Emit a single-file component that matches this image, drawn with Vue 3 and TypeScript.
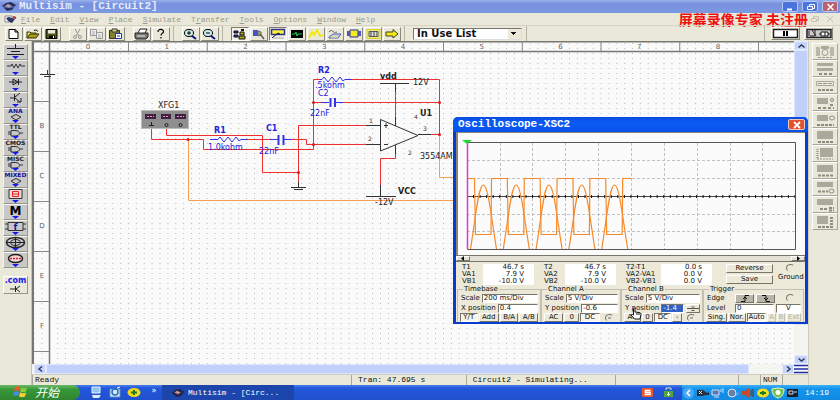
<script setup lang="ts">
import { ref } from 'vue'

interface Tool { name: string; art: string; pressed?: boolean }

const menus = ['File', 'Edit', 'View', 'Place', 'Simulate', 'Transfer', 'Tools', 'Options', 'Window', 'Help']

const toolGroups: { ruled: boolean; tools: Tool[] }[] = [
  {
    ruled: false,
    tools: [
      { name: 'New', art: '<path d="M4 1.500h6l3 2.500v6.500H4z" fill="#fff" stroke="#000"/><path d="M10 1.500v2.500h3" fill="none" stroke="#000"/>' },
      { name: 'Open', art: '<path d="M3 10V4h3l1 1h5v2" fill="#e8e060" stroke="#333300"/><path d="M3 10l3-4h9l-3 4z" fill="#a8a020" stroke="#333300"/><path d="M10 2.500c2-1 3 0 4 1" fill="none" stroke="#000"/>' },
      { name: 'Save', art: '<path d="M3 1.500h11v9H3z" fill="#555a10" stroke="#000"/><path d="M5 2h7v3.500H5z" fill="#e8e8d8"/><path d="M6 7.500h6V11H6z" fill="#000"/><path d="M10 8h1v2h-1z" fill="#fff"/>' },
    ],
  },
  {
    ruled: false,
    tools: [
      { name: 'Cut', art: '<path d="M6 1l4 7M11 1L7 8" stroke="#999" fill="none"/><circle cx="6" cy="9" r="1.500" stroke="#999" fill="none"/><circle cx="11" cy="9" r="1.500" stroke="#999" fill="none"/>' },
      { name: 'Copy', art: '<path d="M2.500 1.500h6v6h-6zM8.500 4.500h6v6h-6z" fill="#eee" stroke="#999"/><path d="M4 4h3M4 6h3M10 7h3M10 9h3" stroke="#aaa"/>' },
      { name: 'Paste', art: '<path d="M2.500 2.500h10v8h-10z" fill="#858030" stroke="#333"/><path d="M5 1h5v3H5z" fill="#ddd870" stroke="#333"/><path d="M8.500 5.500h6v5h-6z" fill="#fff" stroke="#2233aa"/><path d="M10 8h3" stroke="#2233aa"/>' },
    ],
  },
  {
    ruled: false,
    tools: [
      { name: 'Print', art: '<path d="M5 5l2-4h7l-2 4" fill="#fff" stroke="#222"/><path d="M2 5h13v4l-2 2H3L2 9z" fill="#777" stroke="#222"/><path d="M4 8h8" stroke="#eee"/>' },
      { name: 'Help', art: '<path d="M6 4c0-4 6-3 5.500 0C11 5.500 9 5 9 7.500M9 9v1.500" fill="none" stroke="#000" stroke-width="1.200"/>' },
    ],
  },
  {
    ruled: true,
    tools: [
      { name: 'Zoom in', art: '<path d="M9.500 7.500L14 11" stroke="#111188" stroke-width="2"/><ellipse cx="7" cy="5" rx="4.500" ry="3.500" fill="#ccefee" stroke="#000"/><path d="M5 5h4M7 3v4" stroke="#000"/>' },
      { name: 'Zoom out', art: '<path d="M9.500 7.500L14 11" stroke="#111188" stroke-width="2"/><ellipse cx="7" cy="5" rx="4.500" ry="3.500" fill="#ccefee" stroke="#000"/><path d="M5 5h4" stroke="#000"/>' },
    ],
  },
  {
    ruled: true,
    tools: [
      { name: 'Component design', pressed: true, art: '<path d="M3 3h4v2H3zM3 7h4v2H3z" fill="#2030c0" stroke="#111"/><path d="M8 8h6v3H8zM9 4h4v3H9z" fill="#aaa820" stroke="#111"/><path d="M10 2h3" stroke="#111" stroke-width="2"/>' },
      { name: 'Component editor', art: '<path d="M3 2h5v6H3z" fill="#4a50c8"/><path d="M8 3l3 1v3L8 8z" fill="#b0b050" stroke="#666"/><path d="M10 6l4 5" stroke="#555" stroke-width="1.500"/>' },
      { name: 'Instruments', pressed: true, art: '<path d="M2.500 1.500h13v5h-13z" fill="#f8f040" stroke="#333388" stroke-width="1.500"/><path d="M3 10l6-5 2 1" stroke="#111" fill="none"/><path d="M4 10h11" stroke="#aaa"/>' },
      { name: 'Simulate', art: '<path d="M3 2h12v8H3z" fill="#000"/><path d="M4 6h3l1-2 1 4 1-2h4" stroke="#20d050" fill="none"/>' },
      { name: 'Analysis', art: '<path d="M2 10l3-6 2 3 3-5 3 6 3-1" stroke="#f2e800" stroke-width="1.800" fill="none"/>' },
      { name: 'Postprocessor', art: '<path d="M3 4c3-4 4 2 8 0" stroke="#666" fill="none"/><path d="M3 9l4-3h8l-3 4H3z" fill="#c8d0ee" stroke="#5560a8"/><path d="M5 9h7" stroke="#eee860"/>' },
      { name: 'VHDL', art: '<path d="M5 2h8v7H5z" fill="#f4ea20" stroke="#2a30a0"/><path d="M2 3h3v5H2zM13 3h3v5h-3z" fill="#5058b8"/>' },
      { name: 'Reports', art: '<path d="M3 1.500h13v9H3z" fill="#f2ee80" stroke="#d8d020"/><path d="M5 3.500h9v5H5z" fill="#ddd" stroke="#555"/><path d="M6 5h7M6 7h7" stroke="#444" stroke-dasharray="2 1"/>' },
      { name: 'Transfer', art: '<path d="M3 4h7V1.500L15 6l-5 4V8H3z" fill="#f4ea20" stroke="#444010"/>' },
    ],
  },
]

const tri = '<path d="M9 12h7l-3.500 3z" fill="#1515ee"/>'
const gate = '<path d="M8 6.500h4c6 0 6 5.500 0 5.500H8zM5 8h3M5 10h3M17 9h3" fill="none" stroke="#333"/>'
const chip = '<path d="M8 9l5-2.500 5 2.500-5 3z" stroke="#333" fill="none"/>'
const word = (text: string, color: string) =>
  `<text x="12.500" y="5" font-size="6" font-weight="bold" text-anchor="middle" fill="${color}">${text}</text>`

const palette: Tool[] = [
  { name: 'Sources', art: '<path d="M12.500 0v4M4 4.500h17M8 7.500h9M4 10.500h17" stroke="#222" fill="none"/>' + tri },
  { name: 'Basic', art: '<path d="M4 6h4l1-2 2 4 2-4 2 4 2-4 1 2h4" stroke="#333" fill="none"/>' + tri },
  { name: 'Diodes', art: '<path d="M6 6h13M10 3v6l5-3zM15.500 3v6" stroke="#222" fill="none"/>' + tri },
  { name: 'Transistors', art: '<path d="M7 6h4M11.500 2v7M12 5l5-4M12 6l5 4M14 10h4V6" stroke="#222" fill="none"/>' + tri },
  { name: 'Analog ICs', art: word('ANA', '#111199') + chip + tri },
  { name: 'TTL', art: word('TTL', '#222') + gate + tri },
  { name: 'CMOS', art: word('CMOS', '#222') + gate + tri },
  { name: 'Misc digital', art: word('MISC', '#222') + gate + tri },
  { name: 'Mixed ICs', art: word('MIXED', '#111199') + chip + tri },
  { name: 'Indicators', art: '<path d="M6 1.500h13v9H6z" fill="#f4d8d8" stroke="#333"/><path d="M9.500 3.500h6v5h-6zM9.500 6h6" stroke="#ee2020" fill="none"/>' + tri },
  { name: 'Miscellaneous', art: '<text x="12.500" y="11" font-size="12" font-weight="bold" text-anchor="middle" fill="#000">M</text>' + tri },
  { name: 'Controls', art: '<path d="M5 2.500h15v8H5zM2 4h3M2 9h3M20 4h3M20 9h3" stroke="#333" fill="none"/><text x="12.500" y="10" font-size="9" font-weight="bold" text-anchor="middle" fill="#1515aa">f</text>' + tri },
  { name: 'RF', art: '<ellipse cx="12.500" cy="6.500" rx="9" ry="5" fill="none" stroke="#222" stroke-width="1.500"/><path d="M4 6.500h17M12.500 1v11" stroke="#222"/><ellipse cx="12.500" cy="6.500" rx="5" ry="3" fill="none" stroke="#222"/>' + tri },
  { name: 'Electromechanical', art: '<ellipse cx="12.500" cy="6.500" rx="7" ry="4" fill="#eed8d8" stroke="#222" stroke-width="1.500"/><path d="M7 6.500h11" stroke="#dd2020" stroke-width="1.500" stroke-dasharray="2 1"/>' + tri },
]

const instruments: Tool[] = [
  { name: 'Multimeter', art: '<path d="M3 3h4v9H3zM17 3h4v9h-4z" fill="#b9b9ab"/><path d="M8 2h8v3H8z" fill="#aaa99b"/><circle cx="12" cy="8.500" r="3" fill="none" stroke="#99988c"/><path d="M5 13.500h14" stroke="#99988c" stroke-dasharray="3 1"/>' },
  { name: 'Function generator', art: '<path d="M4 2h16v3H4zM4 7h16v3H4z" fill="#aaa99b"/><path d="M6 13h13" stroke="#8d8c80" stroke-width="2" stroke-dasharray="3 2"/>' },
  { name: 'Wattmeter', art: '<path d="M3.500 3.500h17v4h-17z" fill="none" stroke="#aaa99b"/><path d="M5 5.500h14" stroke="#99988c" stroke-dasharray="4 1"/><path d="M5 12h15" stroke="#8d8c80" stroke-width="2" stroke-dasharray="3 1"/>' },
  { name: 'Oscilloscope', art: '<path d="M4 3h11v6H4z" fill="#aaa99b"/><circle cx="19" cy="5" r="1.500" fill="none" stroke="#8d8c80"/><path d="M5 13h16M17 10h4" stroke="#8d8c80" stroke-width="2" stroke-dasharray="3 2"/>' },
  { name: 'Bode plotter', art: '<path d="M4 3h11v6H4z" fill="#aaa99b"/><ellipse cx="19" cy="6" rx="2.500" ry="2" fill="none" stroke="#8d8c80"/><path d="M4 13h17" stroke="#8d8c80" stroke-width="2" stroke-dasharray="3 1"/>' },
  { name: 'Word generator', art: '<path d="M4 2h16v8H4z" fill="#aaa99b"/><path d="M5 13h15" stroke="#8d8c80" stroke-width="2" stroke-dasharray="3 1"/>' },
  { name: 'Logic analyzer', art: '<path d="M7 2h13v9H7z" fill="#aaa99b"/><path d="M4.500 3v10" stroke="#8d8c80" stroke-width="2" stroke-dasharray="1 1"/><path d="M4 13h16" stroke="#8d8c80" stroke-dasharray="2 1"/>' },
  { name: 'Logic converter', art: '<path d="M4 2h16v7H4z" fill="#aaa99b"/><path d="M5 12.500h15" stroke="#8d8c80" stroke-width="2" stroke-dasharray="3 1"/>' },
  { name: 'Distortion analyzer', art: '<path d="M4 2h16v5H4z" fill="#aaa99b"/><path d="M5 11.500h10" stroke="#8d8c80" stroke-width="2" stroke-dasharray="3 1"/><ellipse cx="18.500" cy="11" rx="2.500" ry="2" fill="none" stroke="#8d8c80"/>' },
  { name: 'Spectrum analyzer', art: '<path d="M4 2h16v6H4z" fill="#aaa99b"/><path d="M7 12h7M16 11h5M16 13.500h5" stroke="#8d8c80" stroke-width="2" stroke-dasharray="3 1"/>' },
  { name: 'Network analyzer', art: '<path d="M4 2h11v8H4z" fill="#aaa99b"/><path d="M5 13h15M17 4h4M17 7h4M17 10h4" stroke="#8d8c80" stroke-width="2" stroke-dasharray="3 1"/>' },
]

const quickLaunch: Tool[] = [
  { name: 'Show desktop', art: '<path d="M3 1h8v6H3z" fill="#8fc4f4" stroke="#e8f2ff"/><path d="M3 9h9l-2 3H4z" fill="#dfe9f5"/>' },
  { name: 'Mail', art: '<path d="M2 3h10v8H2z" fill="#d9e9f6" stroke="#5b8fc8"/><circle cx="7" cy="6" r="3" fill="none" stroke="#2c6cc0" stroke-width="1.500"/><path d="M9 2l3-1" stroke="#fff"/>' },
  { name: 'Security', art: '<ellipse cx="7" cy="6.500" rx="6.500" ry="4.500" fill="#f0d820"/><path d="M4 6.500h6M7 4v5" stroke="#1e7a20" stroke-width="2"/>' },
]

const trayIcons: Tool[] = [
  { name: 'Keyboard', art: '<path d="M1 3h6l4 3 2-1v3h-3L6 9H1z" fill="#27303c"/><path d="M3 4l3 3M6 4L3 7" stroke="#eee"/>' },
  { name: 'Network', art: '<path d="M1 3h7v5H1z" fill="#5a74b4" stroke="#cfe0ff"/><path d="M3 10h5M10 2v3M12 1v5" stroke="#cfe0ff"/>' },
  { name: 'Update', art: '<circle cx="6" cy="6" r="4" fill="#6680a8" stroke="#dce8f8"/><path d="M9 9l4-3" stroke="#88b8ff"/>' },
  { name: 'Volume', art: '<path d="M1 4h3l4-3v10L4 8H1z" fill="#c84828"/><path d="M10 3v6M12 2v8" stroke="#603020"/>' },
  { name: 'Antivirus', art: '<ellipse cx="7" cy="6" rx="6" ry="4.500" fill="#f0dc20"/><path d="M4 6h6M7 4v4" stroke="#1e7a20" stroke-width="2"/>' },
  { name: 'Shield', art: '<path d="M1 2l6-1 6 1c0 5-2 8-6 9-4-1-6-4-6-9z" fill="#6cc04c" stroke="#e8f4c8"/><circle cx="7" cy="5.500" r="2.500" fill="#fff"/>' },
  { name: 'Display', art: '<path d="M1 2h11v8H1z" fill="#18202c"/><path d="M3 4h4v3H3zM8 5h3" stroke="#c8d8ec" fill="none"/>' },
]

const columns = Array.from({ length: 9 }, (_, i) => ({ label: String(i), x: 88 + i * 78.75, edge: 128.5 + i * 78.75 }))
const rows = ['', 'B', 'C', 'D', 'E', 'F'].map((label, i) => ({ label, y: 77 + i * 50, edge: 101.5 + i * 50 }))

const period = 32.8
const squareWave = 'M467 178.500H474.500' + Array.from({ length: 5 }, (_, i) => {
  const x = 474.5 + i * period
  return `V178.500L${x + 1} 234.500H${x + 16.5}L${x + 17} 178.500H${i < 4 ? x + period : 631.5}`
}).join('')
const humps = Array.from({ length: 5 }, (_, i) => {
  const x = 470.5 + i * period
  return `M${x} 249C${x + 5.5} 215 ${x + 8} 185 ${x + 12.8} 185S${x + 20.5} 215 ${x + 26} 249`
}).join('')

const readouts = [
  { labels: ['T1', 'VA1', 'VB1'], values: ['46.7 s', '7.9 V', '-10.0 V'], wide: false },
  { labels: ['T2', 'VA2', 'VB2'], values: ['46.7 s', '7.9 V', '-10.0 V'], wide: false },
  { labels: ['T2-T1', 'VA2-VA1', 'VB2-VB1'], values: ['0.0 s', '0.0 V', '0.0 V'], wide: true },
]

const library = ref('In Use List')
const timeScale = ref('200 ms/Div')
const xPosition = ref('0.4')
const scaleA = ref('5 V/Div')
const positionA = ref('-0.6')
const scaleB = ref('5 V/Div')
const positionB = ref('-1.4')
const level = ref('0')
const levelUnit = ref('V')
const timeMode = ref('Y/T')
const triggerMode = ref('Auto')
</script>

<template>
  <div class="app">
    <header class="titlebar">
      <svg class="logo" width="14" height="11" viewBox="0 0 14 11" aria-hidden="true">
        <path d="M0 5l4-3 5-1 5 3-4 5-5 1z" fill="#27305e" /><path d="M3 5l3-2 4 2-3 2z" fill="#c7a9a0" /><path d="M1 6h12" stroke="#6d86d8" />
      </svg>
      <h1>Multisim - [Circuit2]</h1>
      <div class="winbuttons">
        <button type="button" aria-label="Minimize"><svg width="15" height="10"><path d="M4 7.500h5" stroke="#fff" stroke-width="2" /></svg></button>
        <button type="button" aria-label="Restore"><svg width="15" height="10"><path d="M6.500 4V2.500h5v4H10M4.500 4.500h5v3h-5z" stroke="#fff" fill="none" /></svg></button>
        <button type="button" class="close" aria-label="Close"><svg width="15" height="10"><path d="M4.500 2l6 6M10.500 2l-6 6" stroke="#fff" stroke-width="1.500" /></svg></button>
      </div>
    </header>

    <nav class="menubar">
      <svg class="docicon" width="13" height="9" viewBox="0 0 13 9" aria-hidden="true">
        <path d="M1 1h7v6H1z" fill="#fff" stroke="#888" /><path d="M2 3l3-1 6 2-3 4-4-2z" fill="#32356c" /><path d="M9 2l3 1" stroke="#b02828" stroke-width="2" />
      </svg>
      <button v-for="menu in menus" :key="menu" type="button">
        <template v-if="menu === 'Transfer'">T<u>r</u>ansfer</template>
        <template v-else><u>{{ menu[0] }}</u>{{ menu.slice(1) }}</template>
      </button>
      <span class="notice">屏幕录像专家 未注册</span>
      <svg class="mdi" width="28" height="10" aria-hidden="true">
        <path d="M5.500 4V2.500h5v4H9M3.500 4.500h5v3h-5zM19 2l6 6M25 2l-6 6" stroke="#c6c4b6" fill="none" />
      </svg>
    </nav>

    <div class="toolbar">
      <div v-for="(group, g) in toolGroups" :key="g" class="group" :class="{ ruled: group.ruled }">
        <button v-for="tool in group.tools" :key="tool.name" type="button" class="tool" :class="{ pressed: tool.pressed }" :aria-label="tool.name">
          <svg width="18" height="12" v-html="tool.art"></svg>
        </button>
      </div>
      <div class="group ruled">
        <select v-model="library" class="library" aria-label="Component list">
          <option>In Use List</option>
        </select>
      </div>
      <div class="group ruled runs">
        <button type="button" class="run" aria-label="Pause">
          <svg width="28" height="11"><path d="M1.500 1.500h24v8h-24z" fill="#fff" stroke="#222" stroke-width="1.500" /><path d="M12 3v5M15 3v5" stroke="#000" stroke-width="2" /></svg>
        </button>
        <button type="button" class="run" aria-label="Run">
          <svg width="28" height="11"><path d="M2 1.500h24v8H2z" fill="#ccc" stroke="#222" stroke-width="1.500" /><path d="M4 3v5M7 2l4 6M10 2v6H5M14 6h11" stroke="#222" fill="none" /><path d="M16 4h7v4h-7z" fill="#fff" stroke="#111" /><path d="M20 4v4" stroke="#111" /></svg>
        </button>
      </div>
    </div>

    <div class="body">
      <aside class="parts">
        <div class="stack">
          <button v-for="part in palette" :key="part.name" type="button" class="part" :aria-label="part.name">
            <svg width="25" height="16" v-html="part.art"></svg>
          </button>
        </div>
        <button type="button" class="web">
          <span>.com</span>
          <svg width="14" height="8" aria-hidden="true"><path d="M1 4h5M6.500 1v6M7 4l4-3M7 4l4 3" stroke="#222" fill="none" /></svg>
        </button>
      </aside>

      <main class="center">
        <div class="sheet">
          <svg class="canvas" role="img" aria-label="Circuit schematic">
            <defs>
              <pattern id="dots" x="1.5" y="2" width="7.875" height="5" patternUnits="userSpaceOnUse">
                <rect width="1" height="1" fill="#bcbcbc" />
              </pattern>
            </defs>
            <rect width="100%" height="100%" fill="#fafafa" />
            <rect width="100%" height="100%" fill="url(#dots)" />
            <g transform="translate(-32 -41)">
              <path d="M33 41V400M32 41.500H2000" stroke="#77776f" stroke-width="2" />
              <path d="M49.500 41V400M34 51.500H2000" stroke="#777" stroke-width="1.500" />
              <g class="ruler">
                <template v-for="c in columns" :key="c.label">
                  <path :d="`M${c.edge} 42V51`" />
                  <text :x="c.x" y="49">{{ c.label }}</text>
                </template>
                <template v-for="r in rows" :key="r.edge">
                  <path :d="`M34 ${r.edge}H49`" />
                  <text x="42" :y="r.y + 1">{{ r.label }}</text>
                </template>
              </g>
              <path d="M40 74.500H55M47.500 70V75M44 76.500H51" stroke="#333" fill="none" />

              <g class="wire amber">
                <path d="M188.500 139.500V200.500H470M439.500 134.500V177.500H470" />
              </g>
              <g class="wire red">
                <path d="M151.500 126V139.500H203.500V149.500H313.500V79.500H320M352 79.500H439.500V134.500H431" />
                <path d="M166.500 126V135.500H262.500V172.500H298.500M366 125.500H298.500V182" />
                <path d="M247 139.500H271M292 139.500H306.500V144.500H366" />
                <path d="M313.500 102.500H321M343 102.500H439.500" />
                <path d="M395.500 92V117M395.500 154V158.500H380.500V185" />
              </g>
              <g class="lead blue">
                <path d="M210 139.500H218L220 137L224 142L228 137L232 142L236 137L239 141L241 139.500H248" />
                <path d="M320 79.500H322L324 77L328 82L332 77L336 82L340 77L343 81L345 79.500H352" />
                <path d="M270 139.500H278M284 139.500H292M321 102.500H329M336 102.500H343" />
                <path d="M278.500 135V145M283.500 135V145M330.500 98V107M335 98V107" class="plate" />
              </g>
              <g class="lead dark">
                <path d="M380.500 119.500V151L418 135.500ZM366 125.500H380M366 144.500H380M418 134.500H431" />
                <path d="M380 83.500H409M395.500 83V92M395.500 117V126M395.500 145V154M380.500 185V196M366 196.500H396" />
                <path d="M298.500 182V187M291 187.500H306M294 189.500H303M384 125.500H388M386 123V128M384 144.500H388" />
              </g>
              <g fill="#e01818">
                <circle v-for="p in [[313.5, 102.5], [313.5, 144.5], [439.5, 102.5], [439.5, 134.5], [298.5, 172.5], [188, 139.5]]" :key="p.join()" :cx="p[0]" :cy="p[1]" r="1.5" />
              </g>

              <rect x="141.500" y="110.500" width="47" height="18" fill="#8f8f8f" stroke="#bcbcbc" />
              <path d="M145 114h11v5h-11zM161 114h10v5h-10zM175 114h11v5h-11z" fill="#44203f" />
              <path d="M147 116.500h7M163 116.500h6M177 116.500h7" stroke="#d89ad0" stroke-dasharray="2 1" />
              <path d="M149 125.500h5M151.500 122v4" stroke="#222" /><circle cx="166.500" cy="125" r="1.500" fill="none" stroke="#222" /><circle cx="180.500" cy="125" r="1.500" fill="none" stroke="#222" />

              <g class="tag blue">
                <text x="214" y="133" class="strong">R1</text><text x="208" y="150">1.0kohm</text>
                <text x="266" y="131" class="strong">C1</text><text x="259" y="154">22nF</text>
                <text x="318" y="73" class="strong">R2</text><text x="315" y="88">.5kohm</text>
                <text x="318" y="96">C2</text><text x="310" y="116">22nF</text>
              </g>
              <g class="tag dark">
                <text x="158" y="108">XFG1</text>
                <text x="380" y="79" class="strong">vdd</text><text x="413" y="85">12V</text>
                <text x="420" y="116" class="strong">U1</text><text x="420" y="159">3554AM</text>
                <text x="398" y="194" class="strong">VCC</text><text x="375" y="205">-12V</text>
              </g>
              <g class="pin">
                <text x="369" y="123">1</text><text x="368" y="141">2</text><text x="414" y="119">4</text>
                <text x="423" y="131">3</text><text x="408" y="155">2</text>
              </g>
            </g>
          </svg>
          <div class="vscroll">
            <button type="button" aria-label="Scroll up"><svg width="13" height="8"><path d="M3.500 5.500l3-2.500 3 2.500" stroke="#333a55" stroke-width="1.500" fill="none" /></svg></button>
            <span class="thumb"></span>
            <span class="track"></span>
            <button type="button" aria-label="Scroll down"><svg width="13" height="8"><path d="M3.500 2.500l3 2.500 3-2.500" stroke="#333a55" stroke-width="1.500" fill="none" /></svg></button>
          </div>
          <div class="hscroll">
            <button type="button" aria-label="Scroll left"><svg width="11" height="8"><path d="M7 1.500L4 4l3 2.500" stroke="#333a55" stroke-width="1.500" fill="none" /></svg></button>
            <span class="thumb"></span>
            <span class="track"></span>
            <button type="button" aria-label="Scroll right"><svg width="11" height="8"><path d="M4 1.500L7 4 4 6.500" stroke="#333a55" stroke-width="1.500" fill="none" /></svg></button>
          </div>
          <svg class="corner" width="14" height="10" aria-hidden="true"><path d="M0 1.500h14M0 5h14M0 8.500h14" stroke="#1c2fa8" stroke-width="1.500" /></svg>
        </div>

        <footer class="status">
          <span class="ready">Ready</span>
          <span class="tran">Tran: 47.695 s</span>
          <span class="sim">Circuit2 - Simulating...</span>
          <span class="blank"></span>
          <span class="cell"></span>
          <span class="cell">NUM</span>
          <span class="cell last"></span>
        </footer>

        <section class="scope" aria-label="Oscilloscope">
          <header>
            <h2>Oscilloscope-XSC2</h2>
            <button type="button" aria-label="Close oscilloscope"><svg width="16" height="10"><path d="M5 2l6 6M11 2L5 8" stroke="#fff" stroke-width="1.800" /></svg></button>
          </header>
          <svg class="trace" role="img" aria-label="Waveforms">
            <g transform="translate(-456 -132)">
              <path d="M457 132V256" stroke="#8a8678" stroke-width="2" />
              <path d="M456 132.500H806" stroke="#8a8678" />
              <path d="M500.500 143V249M532.500 143V249M565.500 143V249M598.500 143V249M631.500 143V249M664.500 143V249M697.500 143V249M730.500 143V249M762.500 143V249M467 160.500H795M467 178.500H795M467 214.500H795M467 231.500H795" stroke="#c2c2c2" stroke-dasharray="3 2" fill="none" />
              <path d="M467.500 142.500H795.500V249.500H467.500Z" stroke="#555" fill="none" />
              <path d="M467 196.500H795" stroke="#444" />
              <path d="M473 196.500H795" stroke="#111" stroke-width="3" stroke-dasharray="1 5.560" />
              <path :d="squareWave" class="wave" />
              <path :d="humps" class="wave" />
              <path d="M467.500 143V249" stroke="#e030e0" stroke-width="1.500" />
              <path d="M462 140h10l-5 4z" fill="#20d830" />
            </g>
          </svg>
          <div class="scrub">
            <button type="button" aria-label="Back"><svg width="12" height="5"><path d="M7 0v5L4 2.500z" fill="#000" /></svg></button>
            <button type="button" aria-label="Forward"><svg width="12" height="5"><path d="M5 0v5l3-2.500z" fill="#000" /></svg></button>
          </div>

          <div class="panel">
            <div class="readouts">
              <dl v-for="r in readouts" :key="r.labels[0]" :class="{ wide: r.wide }">
                <div v-for="(label, i) in r.labels" :key="label"><dt>{{ label }}</dt><dd>{{ r.values[i] }}</dd></div>
              </dl>
              <div class="actions">
                <button type="button" class="btn">Reverse</button>
                <button type="button" class="btn">Save</button>
              </div>
              <label class="ground"><input type="radio" name="ground" />Ground</label>
            </div>

            <div class="groups">
              <fieldset>
                <legend>Timebase</legend>
                <div class="row"><label for="ts">Scale</label><input id="ts" v-model="timeScale" class="text" /></div>
                <div class="row"><label for="xp">X position</label><input id="xp" v-model="xPosition" class="text" /></div>
                <div class="row keys">
                  <button v-for="m in ['Y/T', 'Add', 'B/A', 'A/B']" :key="m" type="button" class="btn" :class="{ down: m === timeMode }" @click="timeMode = m">{{ m }}</button>
                </div>
              </fieldset>
              <fieldset>
                <legend>Channel A</legend>
                <div class="row"><label for="sa">Scale</label><input id="sa" v-model="scaleA" class="text" /></div>
                <div class="row"><label for="ya">Y position</label><input id="ya" v-model="positionA" class="text" /></div>
                <div class="row keys">
                  <button type="button" class="btn">AC</button><button type="button" class="btn">0</button><button type="button" class="btn down">DC</button>
                  <input type="radio" name="cha" aria-label="Channel A terminal" checked />
                </div>
              </fieldset>
              <fieldset>
                <legend>Channel B</legend>
                <div class="row"><label for="sb">Scale</label><input id="sb" v-model="scaleB" class="text" /></div>
                <div class="row">
                  <label for="yb">Y position</label><input id="yb" v-model="positionB" class="text selected" />
                  <button type="button" class="btn spin" aria-label="Step"><svg width="12" height="7"><path d="M0 3.500h12M4.500 2h3M4.500 5.500h3" stroke="#555" /></svg></button>
                </div>
                <div class="row keys">
                  <button type="button" class="btn">AC</button><button type="button" class="btn">0</button><button type="button" class="btn down">DC</button><button type="button" class="btn">-</button>
                  <input type="radio" name="chb" aria-label="Channel B terminal" checked />
                </div>
              </fieldset>
              <fieldset>
                <legend>Trigger</legend>
                <div class="row edge">
                  <span>Edge</span>
                  <button type="button" class="btn grey" aria-label="Rising edge"><svg width="12" height="7"><path d="M2 6.500h4v-6h4M4 4l2-2 2 2" stroke="#111" fill="none" /></svg></button>
                  <button type="button" class="btn grey" aria-label="Falling edge"><svg width="12" height="7"><path d="M2 .5h4v6h4M4 3l2 2 2-2" stroke="#111" fill="none" /></svg></button>
                  <input type="radio" name="trig" aria-label="Trigger terminal" />
                </div>
                <div class="row edge"><label for="lv">Level</label><input id="lv" v-model="level" class="text" /><input v-model="levelUnit" class="text unit" aria-label="Level unit" /></div>
                <div class="row keys">
                  <button v-for="m in ['Sing.', 'Nor.', 'Auto']" :key="m" type="button" class="btn" :class="{ down: m === triggerMode }" @click="triggerMode = m">{{ m }}</button>
                  <button v-for="m in ['A', 'B', 'Ext']" :key="m" type="button" class="btn" disabled>{{ m }}</button>
                </div>
              </fieldset>
            </div>
          </div>
          <svg class="hand" width="12" height="13" viewBox="0 0 12 13" aria-hidden="true"><path d="M3.500 8V1.500C3.500.5 5 .5 5 1.500V5l4 .500c1.500 0 2 1 2 2L10 12H4.500L1 8c0-1 1.500-1 2.500 0z" fill="#fff" stroke="#111" /><path d="M7 6v2M9 6v2" stroke="#111" /></svg>
        </section>
      </main>

      <aside class="instruments">
        <div class="rack">
          <button v-for="item in instruments" :key="item.name" type="button" :aria-label="item.name">
            <svg width="24" height="15" v-html="item.art"></svg>
          </button>
        </div>
      </aside>
    </div>

    <footer class="taskbar">
      <button type="button" class="start">
        <svg width="15" height="12" viewBox="0 0 15 12" aria-hidden="true">
          <path d="M2 1c2-1 4-1 5 0L6 5C5 4 3 4 1 5z" fill="#f0582c" /><path d="M8 1.500c2 1 4 1 6 0l-1 4c-2 1-4 1-6 0z" fill="#86cc3c" /><path d="M1 6c2-1 4-1 5 0l-1 4c-1-1-3-1-5 0z" fill="#4a8af0" /><path d="M7 6.500c2 1 4 1 6 0l-1 4c-2 1-4 1-6 0z" fill="#f8d038" />
        </svg>
        <span>开始</span>
      </button>
      <div class="quick">
        <button v-for="q in quickLaunch" :key="q.name" type="button" :aria-label="q.name"><svg width="14" height="13" v-html="q.art"></svg></button>
        <span class="more">»</span>
      </div>
      <button type="button" class="task">
        <svg width="14" height="10" viewBox="0 0 14 11" aria-hidden="true"><path d="M0 5l4-3 5-1 5 3-4 5-5 1z" fill="#22264e" /><path d="M3 5l3-2 4 2-3 2z" fill="#c79a90" /></svg>
        <span>Multisim - [Circ...</span>
      </button>
      <div class="pretray">
        <svg width="11" height="9" aria-label="Input method" role="img"><rect width="11" height="9" rx="1" fill="#f05828" /><path d="M8.500 2.500h-5v2h4.500v2h-5.500" stroke="#fff" stroke-width="1.500" fill="none" /></svg>
        <svg width="11" height="11" aria-label="Safely remove" role="img"><path d="M3 3V1h5v2" stroke="#cfe8c0" fill="none" /><path d="M1 4h9v6H1z" fill="#4ea83c" /><path d="M5.500 5v3M4 7l1.500 1.500L7 7" stroke="#fff" fill="none" /></svg>
      </div>
      <div class="tray">
        <button type="button" class="expand" aria-label="Show hidden icons"><svg width="13" height="12"><circle cx="6.500" cy="6" r="5.500" fill="#48a8f4" /><path d="M8 3L5 6l3 3" stroke="#fff" stroke-width="1.500" fill="none" /></svg></button>
        <svg v-for="t in trayIcons" :key="t.name" width="14" height="12" role="img" :aria-label="t.name" v-html="t.art"></svg>
        <time>14:19</time>
      </div>
    </footer>
  </div>
</template>

<style>
body {
  margin: 0;
}
</style>

<style scoped>
* {
  box-sizing: border-box;
}

.app {
  display: flex;
  flex-direction: column;
  height: 100vh;
  overflow: hidden;
  background: #eae9d9;
  color: #111;
  font-family: 'DejaVu Sans', 'Noto Sans CJK SC', sans-serif;
  font-size: 7px;
}

button,
input,
select {
  margin: 0;
  padding: 0;
  border: 0;
  border-radius: 0;
  background: none;
  color: inherit;
  font: inherit;
}

button {
  display: flex;
  align-items: center;
  justify-content: center;
}

svg {
  display: block;
  flex: none;
}

h1,
h2,
dl,
dd {
  margin: 0;
}

.titlebar,
.menubar,
.toolbar,
.body,
.taskbar,
.group,
.status {
  display: flex;
}

.titlebar {
  flex: none;
  align-items: center;
  height: 13px;
  padding: 0 2px;
  gap: 3px;
  background: linear-gradient(#98b2ec, #7890de 30%, #7b9ae2);
  color: #fff;
}

h1,
h2 {
  flex: 1;
  font-family: 'Liberation Mono', monospace;
  font-size: 11px;
  line-height: 13px;
  font-weight: bold;
}

h1 {
  color: #e4ebfb;
}

.winbuttons {
  display: flex;
  gap: 4px;
}

.winbuttons button {
  width: 16px;
  height: 11px;
  border: 1px solid #b4c8f4;
  border-radius: 2px;
  background: #4a74dc;
}

.winbuttons .close {
  background: #b8606e;
}

.menubar {
  flex: none;
  align-items: center;
  height: 12px;
  padding: 0 4px;
  font-family: 'Liberation Mono', 'Noto Sans CJK SC', monospace;
  font-size: 8px;
  color: #9b9989;
}

.menubar button {
  margin-right: 10px;
  white-space: pre;
}

.docicon {
  margin-right: 4px;
}

.notice {
  margin-left: auto;
  color: #f01010;
  font-family: 'Noto Sans CJK SC', sans-serif;
  font-size: 14px;
  font-weight: bold;
  line-height: 12px;
  white-space: nowrap;
}

.toolbar {
  flex: none;
  align-items: stretch;
  height: 16px;
  padding-right: 7px;
  border-top: 1px solid #d6d3c4;
}

.group {
  align-items: center;
  gap: 1px;
  margin-left: 8px;
}

.group:first-child {
  margin-left: 5px;
}

.ruled {
  margin-left: 3px;
  padding-left: 8px;
  border-left: 1px solid #b8b5a6;
}

.tool {
  width: 18px;
  height: 14px;
  border: 1px solid;
  border-color: #fff #8c8a7c #8c8a7c #fff;
}

.pressed {
  border-color: #7c7a6e #fff #fff #7c7a6e;
  background: #f4f2ea;
}

.library {
  width: 109px;
  height: 12px;
  padding-left: 3px;
  border: 1px solid;
  border-color: #777 #ddd #ddd #777;
  appearance: none;
  background:
    linear-gradient(45deg, transparent 50%, #111 50%) right 7px center / 3px 3px no-repeat,
    linear-gradient(-45deg, transparent 50%, #111 50%) right 4px center / 3px 3px no-repeat,
    linear-gradient(#ece9d8, #ece9d8) right / 13px 100% no-repeat,
    #fff;
  background:
    conic-gradient(from -45deg at 50% 100%, #111 90deg, transparent 0) right 3px center / 0 0 no-repeat,
    conic-gradient(from 315deg at 50% 100%, #111 90deg, #ece9d8 0) right 3px center / 0 0 no-repeat,
    linear-gradient(to bottom left, #111 50%, transparent 50%) right 7px center / 3px 3px no-repeat,
    linear-gradient(to bottom right, #111 50%, transparent 50%) right 4px center / 3px 3px no-repeat,
    linear-gradient(#ece9d8, #ece9d8) right / 13px 100% no-repeat,
    #fff;
  font-size: 10px;
  font-weight: bold;
  line-height: 10px;
}

.toolbar .group:nth-last-child(2) {
  margin-right: auto;
  padding-right: 4px;
  border-right: 1px solid #b8b5a6;
}

.runs {
  gap: 4px;
  padding-left: 6px;
}

.run {
  width: 29px;
  height: 13px;
  border: 1px solid;
  border-color: #fff #8c8a7c #8c8a7c #fff;
}

.body {
  flex: 1;
  min-height: 0;
}

.parts {
  flex: none;
  width: 32px;
  padding: 3px 3px 2px;
  border-right: 1px solid #c6c3b4;
}

.part {
  width: 25px;
  height: 16px;
  border: 1px solid;
  border-color: #f4f4ee #96968e #96968e #f4f4ee;
  background: #c8c8c8;
}

.web {
  flex-direction: column;
  width: 25px;
  height: 18px;
  margin-top: 8px;
  border: 1px solid;
  border-color: #fff #96968e #96968e #fff;
  color: #1818e8;
  font-size: 8px;
  font-weight: bold;
  line-height: 8px;
}

.center {
  position: relative;
  display: flex;
  flex: 1;
  flex-direction: column;
  min-width: 0;
}

.sheet {
  display: grid;
  flex: 1;
  grid-template-rows: minmax(0, 1fr) 10px;
  grid-template-columns: minmax(0, 1fr) 14px;
  min-height: 0;
  background: #fafafa;
}

.canvas {
  width: 100%;
  height: 100%;
}

.ruler path {
  stroke: #888;
}

.ruler text {
  fill: #666;
  font-size: 7px;
  text-anchor: middle;
}

.wire {
  fill: none;
}

.red {
  stroke: #f03030;
}

.amber {
  stroke: #f4a050;
}

.lead {
  fill: none;
}

.lead.blue {
  stroke: #3434e4;
}

.lead.dark {
  stroke: #333;
}

.plate {
  stroke-width: 2;
}

.tag,
.pin {
  font-size: 8px;
}

.tag.blue {
  fill: #2222dd;
  stroke: none;
}

.tag.dark {
  fill: #222;
}

.strong {
  font-weight: bold;
}

.pin {
  fill: #333;
  font-size: 6px;
}

.vscroll,
.hscroll {
  display: flex;
  background: #f4f4f0;
}

.vscroll {
  flex-direction: column;
}

.vscroll button,
.hscroll button {
  flex: none;
  border: 1px solid #e4ecff;
  border-radius: 1px;
  background: #c4d4fc;
}

.vscroll button {
  height: 9px;
}

.hscroll button {
  width: 12px;
}

.thumb {
  border: 1px solid #dce6ff;
  background: #c0d0fa;
}

.vscroll .thumb {
  flex: 9;
}

.vscroll .track {
  flex: 1;
}

.hscroll {
  padding-left: 2px;
}

.hscroll .thumb {
  flex: 21;
}

.hscroll .track {
  flex: 1;
}

.status {
  flex: none;
  align-items: center;
  height: 11px;
  border-top: 1px solid #cfccbe;
  font-family: 'Liberation Mono', monospace;
  font-size: 8px;
  line-height: 10px;
}

.status span {
  height: 10px;
  padding: 0 2px;
  border-left: 1px solid #aaa899;
  white-space: pre;
}

.ready {
  flex: 327;
}

.status .tran {
  flex: 110;
  padding-left: 6px;
}

.status .sim {
  flex: 146;
  padding-left: 6px;
}

.blank {
  flex: 123;
}

.status .cell {
  width: 22px;
}

.status .last {
  width: 26px;
}

.scope {
  position: absolute;
  top: 76px;
  right: 0;
  display: flex;
  flex-direction: column;
  width: 355px;
  border: solid #0a3ccc;
  border-width: 0 3px 2px;
  border-radius: 5px 5px 0 0;
  background: #ece9d8;
}

.scope header {
  display: flex;
  align-items: center;
  height: 15px;
  margin: 0 -3px;
  padding: 0 3px 0 5px;
  border-radius: 5px 5px 0 0;
  background: linear-gradient(#0a4ce0, #0a5cf4 40%, #0850e8);
  color: #fff;
}

.scope header button {
  width: 17px;
  height: 11px;
  border: 1px solid #f4c8b8;
  border-radius: 2px;
  background: #e2522c;
}

.trace {
  width: 100%;
  height: 123px;
  background: #fbfbfb;
}

.wave {
  fill: none;
  stroke: #f58a2a;
  stroke-width: 1.2;
}

.scrub {
  display: flex;
  justify-content: space-between;
  height: 7px;
  border: solid #77756a;
  border-width: 1px 0;
  background: #e4e2d4;
}

.scrub button {
  width: 14px;
  border: 1px solid;
  border-color: #fff #777 #777 #fff;
}

.panel {
  padding: 1px 1px 0;
}

.readouts {
  display: flex;
  height: 22px;
  padding: 1px 0 0 5px;
  gap: 10px;
}

.readouts dl {
  display: grid;
  grid-auto-rows: 7px;
  width: 72px;
  background: linear-gradient(#fff, #fff) right / 51px 100% no-repeat;
}

.readouts .wide {
  width: 86px;
}

.readouts dl div {
  display: flex;
  justify-content: space-between;
  padding-right: 10px;
  line-height: 7px;
  white-space: nowrap;
}

.actions {
  display: grid;
  gap: 1px;
  width: 47px;
  margin-left: 4px;
}

.btn {
  height: 9px;
  padding: 0 2px;
  border: 1px solid;
  border-color: #fff #77756a #77756a #fff;
  line-height: 7px;
  white-space: nowrap;
}

.down {
  border-color: #77756a #fff #fff #77756a;
  background: #f6f4ec;
}

.btn:disabled {
  border-color: #fff #c4c1b2 #c4c1b2 #fff;
  color: #b4b1a2;
}

.ground {
  display: flex;
  flex-direction: column;
  align-items: center;
  gap: 1px;
  margin-left: -5px;
  line-height: 8px;
}

input[type='radio'] {
  width: 9px;
  height: 8px;
  border: 1px solid;
  border-color: #77756a #ece9d8 #ece9d8 #77756a;
  border-radius: 50%;
  appearance: none;
}

input[type='radio']:checked {
  background: radial-gradient(#aaa 25%, transparent 30%);
}

.groups {
  display: grid;
  grid-template-columns: 84fr 80fr 82fr 101fr;
}

fieldset {
  min-width: 0;
  margin: 0;
  padding: 0 2px;
  border: 1px solid #c4c1b2;
  border-width: 1px 1px 0;
}

legend {
  margin-left: 3px;
  padding: 0 1px;
  line-height: 8px;
}

.row {
  display: flex;
  align-items: center;
  gap: 2px;
  height: 10px;
  padding-left: 1px;
  white-space: nowrap;
}

.keys {
  gap: 1px;
  height: 9px;
  padding-left: 0;
}

.keys .btn {
  flex: 1 1 auto;
  padding: 0;
}

.keys input {
  margin: 0 4px;
}

.text {
  flex: 1;
  width: 0;
  min-width: 0;
  height: 9px;
  padding: 0 1px;
  border: 1px solid;
  border-color: #77756a #fff #fff #77756a;
  background: #fff;
  line-height: 7px;
}

.selected {
  background: #2f62c4;
  color: #fff;
}

.spin {
  width: 14px;
  padding: 0;
}

.edge > :first-child {
  width: 26px;
}

.edge .grey {
  width: 19px;
  background: #b8b6aa;
}

.edge input[type='radio'] {
  margin: 0 6px 0 auto;
}

.edge .unit {
  flex: none;
  width: 25px;
  text-align: center;
}

.hand {
  position: absolute;
  top: 190px;
  left: 174px;
}

.instruments {
  flex: none;
  width: 32px;
  padding: 2px 3px;
  border-left: 1px solid #cfccbe;
}

.rack {
  display: grid;
  grid-auto-rows: 1fr;
  height: 187px;
  border-bottom: 1px solid #c4c1b2;
}

.rack button {
  border: 1px solid;
  border-color: #fff #a8a698 #a8a698 #fff;
}

.taskbar {
  flex: none;
  align-items: stretch;
  height: 15px;
  background: linear-gradient(#4a80ee, #2258dc 20%, #2050cc);
  color: #fff;
}

.start {
  width: 80px;
  gap: 7px;
  padding: 0 8px 2px 0;
  border-radius: 0 8px 8px 0;
  background: linear-gradient(#6cb868, #389838 30%, #2f8430);
  font-family: 'Noto Sans CJK SC', sans-serif;
  font-size: 12px;
  font-style: italic;
  line-height: 12px;
}

.quick {
  display: flex;
  align-items: center;
  gap: 5px;
  width: 82px;
  padding-left: 9px;
}

.more {
  margin: 0 auto;
  font-size: 8px;
  line-height: 8px;
  padding-bottom: 4px;
}

.task {
  justify-content: flex-start;
  gap: 3px;
  width: 132px;
  padding-left: 9px;
  background: #1c46ac;
  font-family: 'Liberation Mono', monospace;
  font-size: 8px;
  white-space: pre;
}

.pretray {
  display: flex;
  align-items: center;
  gap: 10px;
  margin-left: auto;
  padding-right: 8px;
}

.tray {
  display: flex;
  align-items: center;
  gap: 1px;
  padding-right: 11px;
  background: linear-gradient(#3cb0f6, #1494ec 25%, #128ae0);
}

.tray time {
  margin-left: 4px;
  font-family: 'Liberation Mono', monospace;
  font-size: 8px;
}
</style>
